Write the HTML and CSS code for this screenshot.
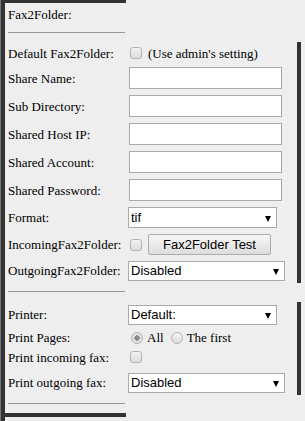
FILE: index.html
```html
<!DOCTYPE html>
<html>
<head>
<meta charset="utf-8">
<link rel="stylesheet" href="styles.css">
</head>
<body>
<div class="frame">
  <div class="inner">
    <div class="bar"></div>
    <div class="title">Fax2Folder:</div>
    <div class="rule"></div>

    <div class="section s1">
      <div class="row h22">
        <span class="lbl">Default Fax2Folder:</span>
        <div class="ctl"><input type="checkbox" class="chk"><span class="note">(Use admin's setting)</span></div>
      </div>
      <div class="row h28">
        <span class="lbl">Share Name:</span>
        <input type="text" class="txt">
      </div>
      <div class="row h28">
        <span class="lbl">Sub Directory:</span>
        <input type="text" class="txt">
      </div>
      <div class="row h28">
        <span class="lbl">Shared Host IP:</span>
        <input type="text" class="txt">
      </div>
      <div class="row h28">
        <span class="lbl">Shared Account:</span>
        <input type="text" class="txt">
      </div>
      <div class="row h28">
        <span class="lbl">Shared Password:</span>
        <input type="password" class="txt">
      </div>
      <div class="row h27">
        <span class="lbl">Format:</span>
        <div class="sel"><select class="short tall"><option>tif</option></select></div>
      </div>
      <div class="row h27">
        <span class="lbl">IncomingFax2Folder:</span>
        <div class="ctl"><input type="checkbox" class="chk"><button class="btn">Fax2Folder Test</button></div>
      </div>
      <div class="row h25">
        <span class="lbl">OutgoingFax2Folder:</span>
        <div class="sel"><select class="long"><option>Disabled</option></select></div>
      </div>
    </div>

    <div class="rule r2"></div>

    <div class="section s2">
      <div class="row h25">
        <span class="lbl">Printer:</span>
        <div class="sel"><select class="short"><option>Default:</option></select></div>
      </div>
      <div class="row h21">
        <span class="lbl">Print Pages:</span>
        <div class="ctl">
          <input type="radio" name="pp" class="rad" checked><span class="opt">All</span>
          <input type="radio" name="pp" class="rad"><span class="opt">The first</span>
        </div>
      </div>
      <div class="row h18">
        <span class="lbl">Print incoming fax:</span>
        <div class="ctl"><input type="checkbox" class="chk"></div>
      </div>
      <div class="row h29">
        <span class="lbl">Print outgoing fax:</span>
        <div class="sel"><select class="long"><option>Disabled</option></select></div>
      </div>
    </div>

    <div class="rule r3"></div>
    <div class="bar bottom"></div>
  </div>
</div>
</body>
</html>
```

FILE: styles.css
```css
html, body {
  margin: 0;
  padding: 0;
}
body {
  background: #eeeeee;
  font-family: "Liberation Serif", "Times New Roman", serif;
  font-size: 13px;
  color: #000;
  overflow: hidden;
}
.frame {
  height: 421px;
  border-left: 1px solid #777;
  box-sizing: border-box;
}
.inner {
  height: 100%;
  border-left: 4px solid #333;
  box-sizing: border-box;
  display: flex;
  flex-direction: column;
}
.bar {
  flex: none;
  width: 121px;
  height: 3px;
  background: #333;
}
.bar.bottom {
  height: 4px;
  margin-top: 9px;
}
.title {
  padding: 4px 0 0 3px;
  line-height: 15px;
  height: 15px;
}
.rule {
  flex: none;
  margin-left: 3px;
  width: 117px;
  border-top: 1px solid #999;
  margin-top: 10px;
}
.rule.r2 {
  margin-top: 8px;
}
.rule.r3 {
  margin-top: 8px;
}
.section {
  flex: none;
  width: 296px;
  box-sizing: border-box;
  border-right: 4px solid #333;
}
.s1 {
  margin-top: 9px;
}
.s2 {
  margin-top: 10px;
}
.row {
  display: flex;
  align-items: center;
  padding-left: 3px;
  box-sizing: border-box;
}
.h18 { height: 18px; }
.h21 { height: 21px; }
.h22 { height: 22px; }
.h25 { height: 25px; }
.h27 { height: 27px; }
.h28 { height: 28px; }
.h29 { height: 29px; padding-top: 4px; }
.lbl {
  flex: none;
  width: 120px;
  line-height: 15px;
  white-space: nowrap;
}
.ctl {
  display: flex;
  align-items: center;
}
.note {
  margin-left: 6px;
  line-height: 15px;
}
.chk, .rad {
  -webkit-appearance: none;
  appearance: none;
  margin: 0 0 0 2px;
  width: 12px;
  height: 12px;
  box-sizing: border-box;
  border: 1px solid #b4b4b4;
  background: linear-gradient(#f4f4f4, #dcdcdc);
  flex: none;
}
.chk {
  border-radius: 3px;
}
.rad {
  border-radius: 50%;
  margin-left: 3px;
}
.rad:checked {
  background: radial-gradient(circle, #8c8c8c 0, #8c8c8c 2.5px, #e6e6e6 3px, #d8d8d8 100%);
}
.opt {
  margin-left: 4px;
  margin-right: 4px;
  line-height: 15px;
}
.txt {
  width: 153px;
  height: 22px;
  margin: 0 0 0 1px;
  box-sizing: border-box;
  border: 1px solid #aaa;
  border-radius: 0;
  background: #fff;
  padding: 0 2px;
  font-family: "Liberation Sans", Arial, sans-serif;
  font-size: 13px;
  outline: none;
}
.sel {
  position: relative;
  display: inline-block;
  line-height: 0;
}
.sel::after {
  content: "";
  position: absolute;
  right: 6px;
  top: 50%;
  margin-top: -2px;
  border-left: 3px solid transparent;
  border-right: 3px solid transparent;
  border-top: 6px solid #000;
  pointer-events: none;
}
.sel select {
  -webkit-appearance: none;
  appearance: none;
  margin: 0;
  height: 20px;
  box-sizing: border-box;
  border: 1px solid #aaa;
  border-radius: 0;
  background: #fff;
  color: #000;
  padding: 0 0 0 2px;
  font-family: "Liberation Sans", Arial, sans-serif;
  font-size: 13px;
  outline: none;
}
.sel select.short {
  width: 149px;
}
.sel select.long {
  width: 157px;
}
.sel select.tall {
  height: 21px;
}
.btn {
  margin: 0 0 0 6px;
  width: 123px;
  height: 21px;
  box-sizing: border-box;
  border: 1px solid #adadad;
  border-radius: 2px;
  background: linear-gradient(#f6f6f6, #dddddd);
  font-family: "Liberation Sans", Arial, sans-serif;
  font-size: 13px;
  color: #000;
  padding: 0;
}
```
